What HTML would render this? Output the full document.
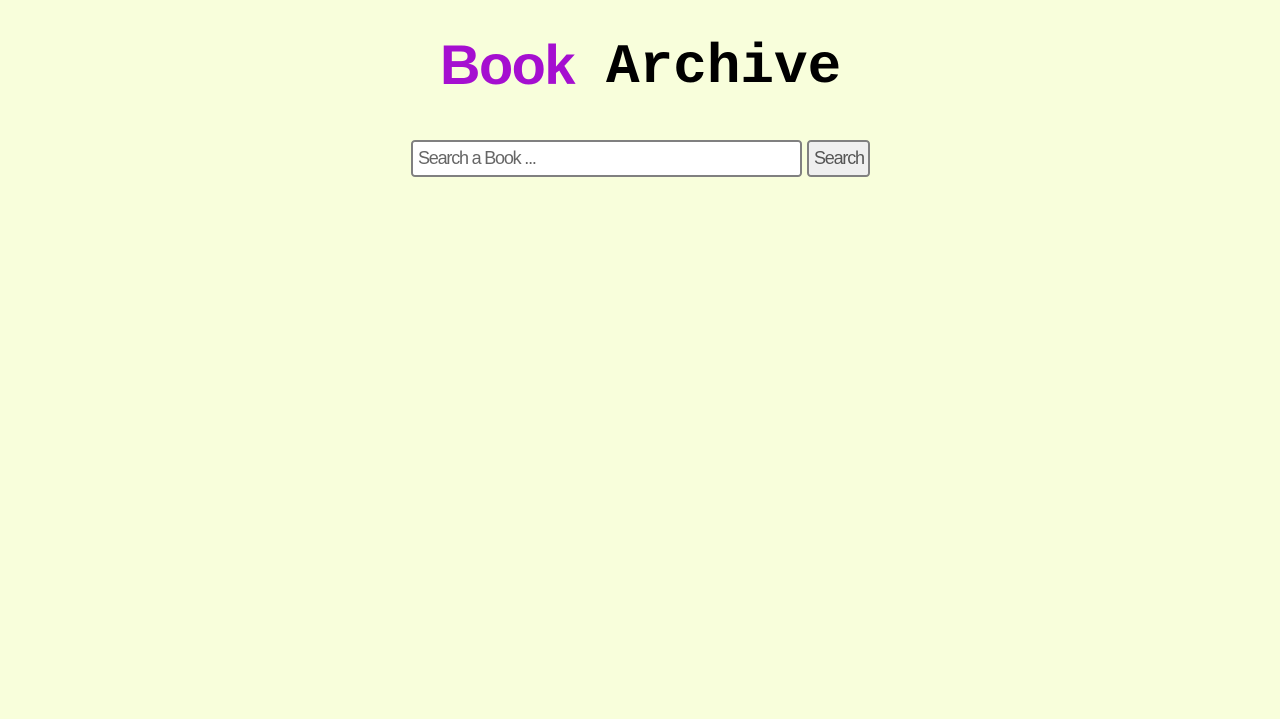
<!DOCTYPE html>
<html><head><style>
html,body{margin:0;background:#f8fedb;width:1280px;height:719px;overflow:hidden}
.t{position:absolute;font-size:56px;line-height:66px;font-weight:bold;white-space:nowrap;margin:0}
.b{font-family:"Liberation Sans",sans-serif;color:#a50fd0;letter-spacing:-1.5px;left:440px;top:32px}
.a{font-family:"Liberation Mono",monospace;color:#000;left:606px;top:34px}
.in{position:absolute;left:411px;top:140px;width:387px;height:33px;border:2px solid #808080;border-radius:4px;background:#fff}
.in span,.bt span{font-family:"Liberation Sans",sans-serif;font-size:18px;color:#666;letter-spacing:-1.2px;position:absolute;top:6px}
.in span{left:5px}
.bt{position:absolute;left:807px;top:140px;width:59px;height:33px;border:2px solid #808080;border-radius:4px;background:#efefef}
.bt span{left:5px;color:#555}
</style></head><body>
<div class="t b">Book</div><div class="t a">Archive</div>
<div class="in"><span>Search a Book ...</span></div>
<div class="bt"><span>Search</span></div>
</body></html>
